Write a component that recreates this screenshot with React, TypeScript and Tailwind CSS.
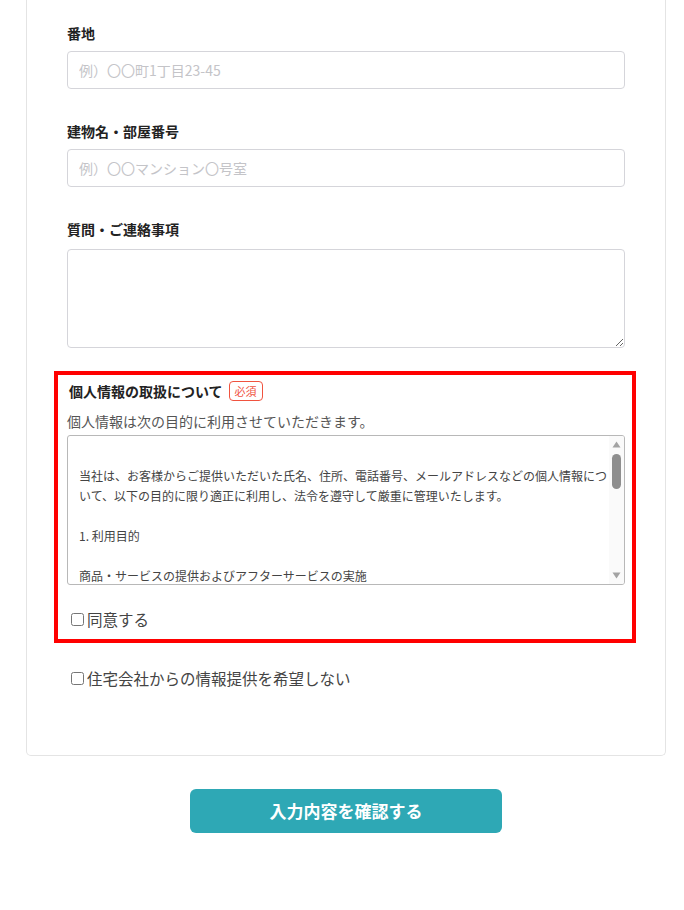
const font = { fontFamily: '"Noto Sans CJK JP", "Noto Sans", sans-serif' }

const policy = `
当社は、お客様からご提供いただいた氏名、住所、電話番号、メールアドレスなどの個人情報について、以下の目的に限り適正に利用し、法令を遵守して厳重に管理いたします。

1. 利用目的

商品・サービスの提供およびアフターサービスの実施

お問い合わせへの回答およびご連絡

資料・カタログ等の送付

2. 第三者への提供

法令に基づく場合を除き、ご本人の同意なく第三者に提供することはありません。`

const Field = ({ label, placeholder }: { label: string; placeholder: string }) => (
  <div>
    <label className="block text-[14px] font-bold leading-[20px] text-[#222]">{label}</label>
    <input
      className="mt-[8px] block h-[38px] w-full rounded-[4px] border border-[#d5d5da] px-[11px] text-[14px] text-[#333] placeholder:text-[#c4c4c8] focus:outline-none"
      placeholder={placeholder}
    />
  </div>
)

// fake classic scrollbar drawn over the policy box
const Scrollbar = () => (
  <div className="pointer-events-none absolute top-0 right-0 bottom-0 w-[15px] bg-[#fafafa]">
    <svg className="absolute top-[5px] left-[3px]" width="9" height="7" viewBox="0 0 9 7">
      <path d="M4.5 0.5 L8.5 6.5 L0.5 6.5 Z" fill="#a3a3a3" />
    </svg>
    <div className="absolute top-[18px] left-[3px] h-[35px] w-[9px] rounded-full bg-[#8e8e8e]" />
    <svg className="absolute bottom-[5px] left-[3px]" width="9" height="7" viewBox="0 0 9 7">
      <path d="M0.5 0.5 L8.5 0.5 L4.5 6.5 Z" fill="#a3a3a3" />
    </svg>
  </div>
)

export default function App() {
  return (
    <div className="min-h-[910px] bg-white" style={font}>
      <div className="ml-[26px] w-[640px]">
        <div className="rounded-b-[5px] border border-t-0 border-[#e4e4e4] px-[40px] pt-[23px] pb-[65px]">
          <div className="flex flex-col gap-[32px]">
            <Field label="番地" placeholder="例）〇〇町1丁目23-45" />
            <Field label="建物名・部屋番号" placeholder="例）〇〇マンション〇号室" />
            <div>
              <label className="block text-[14px] font-bold leading-[20px] text-[#222]">質問・ご連絡事項</label>
              <textarea className="mt-[10px] block h-[99px] w-full rounded-[4px] border border-[#d5d5da] px-[11px] py-[8px] text-[14px] focus:outline-none" />
            </div>
          </div>

          <div className="mt-[23px] -ml-[13px] -mr-[11px] border-4 border-[#ff0000] pl-[9px] pr-[7px] pt-[6px] pb-[8px]">
            <div className="flex h-[20px] items-center gap-[6px] pl-[2px]">
              <span className="text-[14px] font-bold leading-[20px] text-[#222]">個人情報の取扱について</span>
              <span className="rounded-[4px] border border-[#f0533f] px-[5px] text-[11px] leading-[18px] text-[#f0533f]">必須</span>
            </div>
            <p className="mt-[10px] text-[14px] leading-[20px] text-[#555]">個人情報は次の目的に利用させていただきます。</p>
            <div className="relative mt-[4px] h-[150px] overflow-hidden rounded-[3px] border border-[#b8b8b8]">
              <div className="h-full overflow-y-scroll whitespace-pre-wrap pt-[10px] pr-[16px] pl-[11px] text-[12px] leading-[20px] text-[#444] [scrollbar-width:none]">
                {policy}
              </div>
              <Scrollbar />
            </div>
            <label className="mt-[22px] flex items-center text-[15.5px] leading-[24px] text-[#444]">
              <input type="checkbox" className="ml-[4px] mr-[3px] h-[13px] w-[13px] shrink-0" />
              <span>同意する</span>
            </label>
          </div>

          <label className="mt-[23px] flex items-center text-[15.5px] leading-[24px] text-[#444]">
            <input type="checkbox" className="ml-[4px] mr-[3px] h-[13px] w-[13px] shrink-0" />
            <span>住宅会社からの情報提供を希望しない</span>
          </label>
        </div>

        <div className="mt-[33px] flex justify-center">
          <button className="h-[44px] w-[312px] rounded-[6px] bg-[#2ea8b5] text-[17px] font-bold text-white">
            入力内容を確認する
          </button>
        </div>
      </div>
    </div>
  )
}
